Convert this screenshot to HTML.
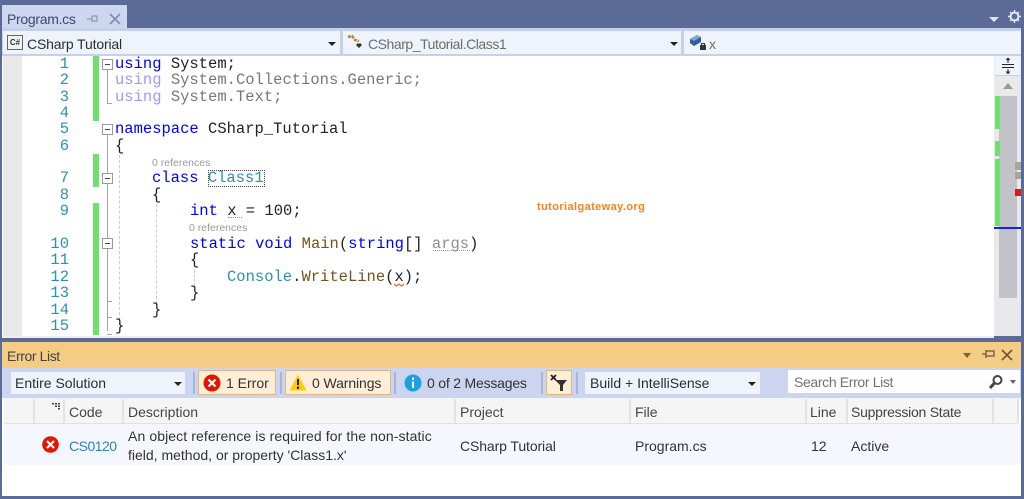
<!DOCTYPE html>
<html><head><meta charset="utf-8">
<style>
html,body{margin:0;padding:0;width:1024px;height:499px;overflow:hidden;background:#5b6a97}
#r{position:relative;width:1024px;height:499px;overflow:hidden;font-family:"Liberation Sans",sans-serif;font-size:14px;color:#333;filter:blur(.3px)}
.a{position:absolute}
.t{position:absolute;white-space:pre;line-height:18px}
.c{position:absolute;white-space:pre;font-family:"Liberation Mono",monospace;font-size:15.5px;line-height:16px;color:#222;left:115px}
.n{position:absolute;left:30px;width:39px;text-align:right;font-family:"Liberation Mono",monospace;font-size:15.5px;line-height:16px;color:#2b91af}
.k{color:#0000ff}.g{color:#777}.m{color:#74531f}.y{color:#2b91af}
.dk{color:#9a9aff}
.ref{position:absolute;font-size:10.5px;color:#999;line-height:12px;white-space:pre}
.v{position:absolute;width:0;border-left:1px dashed #ccc}
.tree{position:absolute;background:#a5a5a5;width:1px}
.box{position:absolute;left:102px;width:9px;height:9px;border:1px solid #999;background:#fff}
.box:after{content:"";position:absolute;left:2px;top:4px;width:5px;height:1px;background:#444}
.sep{position:absolute;top:372px;height:22px;width:2px;background:#a9b6d8}
.btn{position:absolute;top:370px;height:23px;background:#fdeed8;border:1px solid #e5b87a}
.hs{position:absolute;top:399px;height:24px;width:2px;background:#e2e2e2}
.tri{position:absolute;width:0;height:0;border-left:4px solid transparent;border-right:4px solid transparent;border-top:4px solid #222}
</style></head><body><div id="r">

<!-- title strip -->
<div class="a" style="left:2px;top:5px;width:125px;height:23px;background:#ccd6ef"></div>
<div class="t" style="left:7px;top:10px;font-size:14px;color:#3c4a6b;letter-spacing:-.3px">Program.cs</div>
<svg class="a" style="left:86px;top:12px" width="14" height="14"><path d="M1 7H6M6 4V10M6 4H11V9H6" fill="none" stroke="#7f8bab" stroke-width="1"/></svg>
<svg class="a" style="left:108px;top:12px" width="14" height="14"><path d="M2 2L12 12M12 2L2 12" stroke="#7f8bab" stroke-width="1.6"/></svg>
<div class="a" style="left:989px;top:17px;width:0;height:0;border-left:5px solid transparent;border-right:5px solid transparent;border-top:5px solid #dfe5f5"></div>
<svg class="a" style="left:1008px;top:10px" width="13" height="13"><circle cx="6.500" cy="6.500" r="4" fill="none" stroke="#e3e8f6" stroke-width="2"/><path d="M6.500 0V3M6.500 10V13M0 6.500H3M10 6.500H13M2 2L4 4M9 9L11 11M11 2L9 4M4 9L2 11" stroke="#e3e8f6" stroke-width="1.400"/></svg>

<!-- nav bar -->
<div class="a" style="left:2px;top:28px;width:1019px;height:28px;background:#c4d1ec"></div>
<div class="a" style="left:3px;top:31px;width:337px;height:23px;background:#eff3fc"></div>
<div class="a" style="left:343px;top:31px;width:338px;height:23px;background:#eff3fc"></div>
<div class="a" style="left:684px;top:31px;width:337px;height:23px;background:#eff3fc"></div>
<div class="a" style="left:7px;top:35px;width:14px;height:13px;border:1px solid #666;background:#f2f2f2;font-size:8px;line-height:13px;text-align:center;font-weight:bold;color:#333">C#</div>
<div class="t" style="left:27px;top:35px;color:#2e2e2e;letter-spacing:-.15px">CSharp Tutorial</div>
<div class="tri" style="left:328px;top:42px"></div>
<svg class="a" style="left:347px;top:34px" width="18" height="17"><path d="M1 3L5 2L8 6L12 7" fill="none" stroke="#c27d3a" stroke-width="2.500" stroke-dasharray="3 1"/><path d="M9 11l2-2 1 1 1-1 2 2-3 3z" fill="#333"/></svg>
<div class="t" style="left:368px;top:35px;color:#6d6d6d;letter-spacing:-.45px">CSharp_Tutorial.Class1</div>
<div class="tri" style="left:670px;top:42px"></div>
<svg class="a" style="left:689px;top:33px" width="20" height="18"><path d="M1 6L8 2L12 4V9L5 13L1 10Z" fill="#2f5e99"/><path d="M1 6L8 2L12 4L5 8Z" fill="#7fa4d0"/><rect x="11" y="12" width="6" height="5" fill="#333"/><path d="M12.500 12V10.500H15.500V12" fill="none" stroke="#333"/></svg>
<div class="t" style="left:709px;top:35px;color:#6d6d6d">x</div>

<!-- editor -->
<div class="a" style="left:2px;top:56px;width:992px;height:280px;background:#fff"></div>
<div class="a" style="left:3px;top:56px;width:19px;height:280px;background:#e8e8e8"></div>
<div class="a" style="left:93px;top:56px;width:6px;height:65px;background:#6ce26c"></div>
<div class="a" style="left:93px;top:154px;width:6px;height:33px;background:#6ce26c"></div>
<div class="a" style="left:93px;top:203px;width:6px;height:132px;background:#6ce26c"></div>

<div class="n" style="top:56px">1</div><div class="n" style="top:72px">2</div><div class="n" style="top:89px">3</div>
<div class="n" style="top:105px">4</div><div class="n" style="top:121px">5</div><div class="n" style="top:138px">6</div>
<div class="n" style="top:170px">7</div><div class="n" style="top:187px">8</div><div class="n" style="top:203px">9</div>
<div class="n" style="top:236px">10</div><div class="n" style="top:252px">11</div><div class="n" style="top:269px">12</div>
<div class="n" style="top:285px">13</div><div class="n" style="top:302px">14</div><div class="n" style="top:318px">15</div>

<!-- fold tree -->
<div class="box" style="top:59px"></div>
<div class="tree" style="left:107px;top:70px;height:34px"></div><div class="a" style="left:107px;top:103px;width:5px;height:1px;background:#a5a5a5"></div>
<div class="box" style="top:124px"></div>
<div class="tree" style="left:107px;top:135px;height:38px"></div>
<div class="box" style="top:173px"></div>
<div class="tree" style="left:107px;top:184px;height:54px"></div>
<div class="box" style="top:238px"></div>
<div class="tree" style="left:107px;top:249px;height:82px"></div>
<div class="a" style="left:107px;top:301px;width:5px;height:1px;background:#a5a5a5"></div>
<div class="a" style="left:107px;top:317px;width:5px;height:1px;background:#a5a5a5"></div>
<div class="a" style="left:107px;top:334px;width:5px;height:1px;background:#a5a5a5"></div>
<div class="v" style="left:119px;top:155px;height:170px"></div>
<div class="v" style="left:156px;top:204px;height:100px"></div>
<div class="v" style="left:194px;top:270px;height:16px"></div>

<div class="c" style="top:56px"><span class="k">using</span> System;</div>
<div class="c" style="top:72px"><span class="dk">using</span> <span class="g">System.Collections.Generic;</span></div>
<div class="c" style="top:89px"><span class="dk">using</span> <span class="g">System.Text;</span></div>
<div class="c" style="top:121px"><span class="k">namespace</span> CSharp_Tutorial</div>
<div class="c" style="top:138px">{</div>
<div class="ref" style="left:152px;top:157px">0 references</div>
<div class="c" style="top:170px;left:152px"><span class="k">class</span> <span class="y">Class1</span></div>
<div class="a" style="left:208px;top:170px;width:55px;height:15px;border:1px dotted #444"></div>
<div class="c" style="top:187px;left:152px">{</div>
<div class="c" style="top:203px;left:190px"><span class="k">int</span> x = 100;</div>
<div class="a" style="left:228px;top:217px;width:14px;border-top:1px dotted #999"></div>
<div class="ref" style="left:189px;top:222px">0 references</div>
<div class="c" style="top:236px;left:190px"><span class="k">static void</span> <span class="m">Main</span>(<span class="k">string</span>[] <span style="color:#8f8f8f">args</span>)</div>
<div class="a" style="left:433px;top:250px;width:37px;border-top:1px dotted #999"></div>
<div class="c" style="top:252px;left:190px">{</div>
<div class="c" style="top:269px;left:227px"><span class="y">Console</span>.<span class="m">WriteLine</span>(x);</div>
<svg class="a" style="left:394px;top:283px" width="10" height="4"><path d="M0 1L2.500 3L5 1L7.500 3L10 1" fill="none" stroke="#e8431f" stroke-width="1"/></svg>
<div class="c" style="top:285px;left:190px">}</div>
<div class="c" style="top:302px;left:152px">}</div>
<div class="c" style="top:318px">}</div>

<div class="t" style="left:537px;top:198px;font-size:11px;font-weight:bold;color:#f58220;letter-spacing:.4px">tutorialgateway.org</div>

<!-- scrollbar -->
<div class="a" style="left:994px;top:56px;width:27px;height:280px;background:#e9e9ec"></div>
<div class="a" style="left:995px;top:56px;width:25px;height:19px;background:#eff3fc;border-bottom:1px solid #c4d1ec"></div>
<svg class="a" style="left:1000px;top:57px" width="16" height="18"><path d="M2 7.500H14M2 10.500H14M8 1V6M8 12V17" stroke="#222" stroke-width="1"/><path d="M5.500 3L8 .5L10.500 3ZM5.500 14.500L8 17L10.500 14.500Z" fill="#222"/></svg>
<div class="a" style="left:1003px;top:83px;width:0;height:0;border-left:5px solid transparent;border-right:5px solid transparent;border-bottom:6px solid #9a9a9a"></div>
<div class="a" style="left:999px;top:96px;width:18px;height:202px;background:#c2c3c9"></div>
<div class="a" style="left:995px;top:96px;width:5px;height:33px;background:#6ce26c"></div>
<div class="a" style="left:995px;top:141px;width:5px;height:15px;background:#6ce26c"></div>
<div class="a" style="left:995px;top:159px;width:5px;height:67px;background:#6ce26c"></div>
<div class="a" style="left:1015px;top:162px;width:6px;height:8px;background:#a8a49e"></div>
<div class="a" style="left:1015px;top:172px;width:6px;height:7px;background:#a8a49e"></div>
<div class="a" style="left:1015px;top:189px;width:6px;height:7px;background:#e8140e"></div>
<div class="a" style="left:994px;top:227px;width:27px;height:2px;background:#1c1cf0"></div>

<!-- splitter -->
<div class="a" style="left:2px;top:336px;width:992px;height:2px;background:#eeeeee"></div>

<!-- error list header -->
<div class="a" style="left:2px;top:342px;width:1019px;height:26px;background:#f5cc84"></div>
<div class="t" style="left:7px;top:347px;color:#444;letter-spacing:-.4px">Error List</div>
<div class="a" style="left:963px;top:353px;width:0;height:0;border-left:4.500px solid transparent;border-right:4.500px solid transparent;border-top:5px solid #7a6238"></div>
<svg class="a" style="left:981px;top:348px" width="14" height="12"><path d="M1 6H5M5 2V10M5 3H13V8H5" fill="none" stroke="#6b5838" stroke-width="1.300"/></svg>
<svg class="a" style="left:1001px;top:349px" width="12" height="12"><path d="M1 1L11 11M11 1L1 11" stroke="#6b5838" stroke-width="1.600"/></svg>

<!-- error list toolbar -->
<div class="a" style="left:2px;top:368px;width:1019px;height:30px;background:#ccd5f0"></div>
<div class="a" style="left:11px;top:372px;width:174px;height:22px;background:#eff3fc"></div>
<div class="t" style="left:15px;top:374px;color:#2e2e2e">Entire Solution</div>
<div class="tri" style="left:174px;top:382px"></div>
<div class="sep" style="left:193px"></div>
<div class="btn" style="left:198px;width:76px"></div>
<svg class="a" style="left:203px;top:374px" width="18" height="18"><circle cx="9" cy="9" r="8.500" fill="#e51400"/><path d="M5.500 5.500L12.500 12.500M12.500 5.500L5.500 12.500" stroke="#fff" stroke-width="2.200"/></svg>
<div class="t" style="left:226px;top:374px;color:#333">1 Error</div>
<div class="sep" style="left:280px"></div>
<div class="btn" style="left:285px;width:104px"></div>
<svg class="a" style="left:289px;top:374px" width="18" height="17"><path d="M9 0.500L17.500 16.500H.5Z" fill="#fc0"/><path d="M9 5V11M9 12.500V15" stroke="#222" stroke-width="2"/></svg>
<div class="t" style="left:312px;top:374px;color:#333;letter-spacing:-.1px">0 Warnings</div>
<div class="sep" style="left:394px"></div>
<svg class="a" style="left:404px;top:374px" width="18" height="18"><circle cx="9" cy="9" r="8.500" fill="#1ba1e2"/><path d="M9 3.500V6M9 7.500V14" stroke="#fff" stroke-width="2"/></svg>
<div class="t" style="left:427px;top:374px;color:#333;letter-spacing:-.2px">0 of 2 Messages</div>
<div class="sep" style="left:541px"></div>
<div class="btn" style="left:546px;width:24px"></div>
<svg class="a" style="left:550px;top:374px" width="18" height="18"><path d="M1 1L6 6M6 1L1 6" stroke="#222" stroke-width="1.800"/><path d="M5 6H17L13 11V17H10V11Z" fill="#333"/></svg>
<div class="sep" style="left:576px"></div>
<div class="a" style="left:585px;top:372px;width:175px;height:22px;background:#eff3fc"></div>
<div class="t" style="left:590px;top:374px;color:#2e2e2e">Build + IntelliSense</div>
<div class="tri" style="left:748px;top:382px"></div>
<div class="a" style="left:788px;top:370px;width:232px;height:23px;background:#fff"></div>
<div class="t" style="left:794px;top:373px;color:#717171;letter-spacing:-.35px">Search Error List</div>
<svg class="a" style="left:988px;top:374px" width="16" height="16"><circle cx="9.500" cy="6" r="4" fill="none" stroke="#444" stroke-width="2"/><path d="M6.500 9L2 14" stroke="#444" stroke-width="3"/></svg>
<div class="a" style="left:1010px;top:380px;width:0;height:0;border-left:3.500px solid transparent;border-right:3.500px solid transparent;border-top:4px solid #666"></div>

<!-- error table -->
<div class="a" style="left:2px;top:398px;width:1019px;height:98px;background:#fff"></div>
<div class="a" style="left:4px;top:398px;width:1014px;height:25px;background:#f5f5f5;border-bottom:1px solid #e2e2e2"></div>
<div class="a" style="left:4px;top:424px;width:1017px;height:41px;background:#f5f7fe"></div>
<div class="hs" style="left:33px"></div><div class="hs" style="left:63px"></div><div class="hs" style="left:122px"></div>
<div class="hs" style="left:454px"></div><div class="hs" style="left:629px"></div><div class="hs" style="left:805px"></div>
<div class="hs" style="left:846px"></div><div class="hs" style="left:992px"></div><div class="hs" style="left:1017px"></div>
<svg class="a" style="left:52px;top:403px" width="9" height="7"><path d="M0 0h2v1.500h-2zM3 0h2v1.500h-2zM6 0h2v1.500h-2zM3 2.500h2v1.500h-2zM6 2.500h2v1.500h-2zM6 5h2v1.500h-2z" fill="#444"/></svg>
<div class="t" style="left:69px;top:403px;color:#444">Code</div>
<div class="t" style="left:128px;top:403px;color:#444">Description</div>
<div class="t" style="left:460px;top:403px;color:#444">Project</div>
<div class="t" style="left:635px;top:403px;color:#444">File</div>
<div class="t" style="left:810px;top:403px;color:#444">Line</div>
<div class="t" style="left:851px;top:403px;color:#444;letter-spacing:-.25px">Suppression State</div>

<svg class="a" style="left:42px;top:436px" width="17" height="17"><circle cx="8.500" cy="8.500" r="8.300" fill="#e51400"/><path d="M5 5L12 12M12 5L5 12" stroke="#fff" stroke-width="2.200"/></svg>
<div class="t" style="left:69px;top:437px;color:#2f7fbf;letter-spacing:-.5px">CS0120</div>
<div class="t" style="left:128px;top:427px;color:#333;letter-spacing:.1px">An object reference is required for the non-static</div>
<div class="t" style="left:128px;top:446px;color:#333">field, method, or property 'Class1.x'</div>
<div class="t" style="left:460px;top:437px;color:#333;letter-spacing:-.1px">CSharp Tutorial</div>
<div class="t" style="left:635px;top:437px;color:#333">Program.cs</div>
<div class="t" style="left:811px;top:437px;color:#333">12</div>
<div class="t" style="left:851px;top:437px;color:#333">Active</div>

</div></body></html>
